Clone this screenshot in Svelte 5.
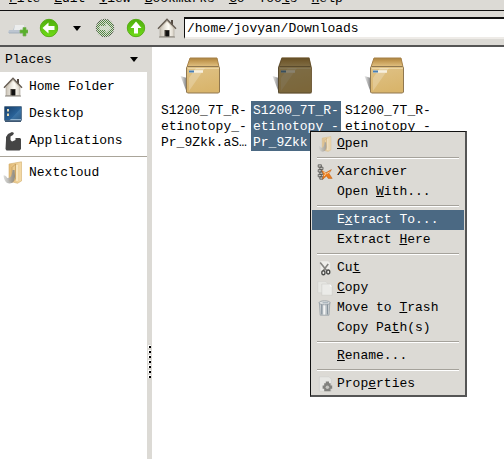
<script>
  const menus = [['F', 'ile'], ['E', 'dit'], ['V', 'iew'], ['B', 'ookmarks'], ['G', 'o'], ['Too', 'l', 's'], ['H', 'elp']];
  const places = [
    { icon: 'home', label: 'Home Folder' },
    { icon: 'desktop', label: 'Desktop' },
    { icon: 'apps', label: 'Applications' }
  ];
  const files = [
    { lines: ['S1200_7T_R-', 'etinotopy_-', 'Pr_9Zkk.aS…'], selected: false },
    { lines: ['S1200_7T_R-', 'etinotopy_-', 'Pr_9Zkk'], selected: true },
    { lines: ['S1200_7T_R-', 'etinotopy_-'], selected: false }
  ];
  // Each entry: text before the mnemonic, the mnemonic, text after it
  const groups = [
    [{ icon: 'folder', t: ['', 'O', 'pen'] }],
    [{ icon: 'xarchiver', t: ['Xarchiver', '', ''] }, { t: ['Open ', 'W', 'ith...'] }],
    [{ t: ['E', 'x', 'tract To...'], active: true }, { t: ['Extract ', 'H', 'ere'] }],
    [
      { icon: 'cut', t: ['Cu', 't', ''] },
      { icon: 'copy', t: ['', 'C', 'opy'] },
      { icon: 'trash', t: ['Move to ', 'T', 'rash'] },
      { t: ['Copy Pa', 't', 'h(s)'] }
    ],
    [{ t: ['', 'R', 'ename...'] }],
    [{ icon: 'props', t: ['Prop', 'e', 'rties'] }]
  ];
  let path = $state('/home/jovyan/Downloads');
</script>

<svelte:head><title>Downloads</title></svelte:head>

<svg class="defs" aria-hidden="true">
  <defs>
    <linearGradient id="green" x2="0" y2="1"><stop offset="0" stop-color="#4fae0e" /><stop offset="1" stop-color="#6fdc16" /></linearGradient>
    <linearGradient id="cream" x2="1"><stop offset="0" stop-color="#c9c2b6" /><stop offset=".6" stop-color="#fffdf6" /><stop offset="1" stop-color="#d6d0c5" /></linearGradient>
    <linearGradient id="tan" x2="1"><stop offset="0" stop-color="#e2b974" /><stop offset="1" stop-color="#f4dba9" /></linearGradient>
    <linearGradient id="steel" x2="1"><stop offset="0" stop-color="#d9d9d6" /><stop offset="1" stop-color="#84827d" /></linearGradient>
    <linearGradient id="box" x2=".3" y2="1"><stop offset="0" stop-color="#dfc287" /><stop offset="1" stop-color="#d9b56c" /></linearGradient>
    <linearGradient id="lid" x2="0" y2="1"><stop offset="0" stop-color="#a98243" /><stop offset=".3" stop-color="#c19750" /><stop offset="1" stop-color="#e5c586" /></linearGradient>
    <linearGradient id="shade" x2="1"><stop offset="0" stop-color="#777" stop-opacity=".15" /><stop offset="1" stop-color="#555" stop-opacity=".8" /></linearGradient>
    <linearGradient id="blue" x2="1" y2="1"><stop offset="0" stop-color="#173e69" /><stop offset=".6" stop-color="#2a6399" /><stop offset="1" stop-color="#173d65" /></linearGradient>
    <pattern id="checks" width="2" height="2" patternUnits="userSpaceOnUse"><path d="M0 0h1v1H0zM1 1h1v1H1z" fill="#dcdad5" /></pattern>
  </defs>
</svg>

{#snippet icon(name)}
  {#if name === 'home'}
    <svg class="icon" viewBox="0 0 20 20" aria-hidden="true">
      <path d="M14 2h2v5h-2z" fill="#554b42" />
      <path d="M3 10 10 3l7 7v8.500H3z" fill="url(#cream)" stroke="#aaa399" stroke-width=".6" />
      <path d="M1 10.700 10 1.300l9 9.400" fill="none" stroke="#665d53" stroke-width="1.500" />
      <path d="M2.500 10.900 10 3.200l7.500 7.700" fill="none" stroke="#c6bcab" stroke-width="1" />
      <path d="M7.500 12h5v6.500h-5z" fill="#39342e" /><path d="M9 13h3v5.500H9z" fill="#111" />
      <path d="M2 19h16" stroke="#858078" />
    </svg>
  {:else if name === 'desktop'}
    <svg class="icon" viewBox="0 0 20 20" aria-hidden="true">
      <rect x="1.500" y="2.500" width="17" height="14" rx=".5" fill="url(#blue)" stroke="#5e7891" />
      <path d="M7 16 18 4v12z" fill="#5b91bd" opacity=".35" />
      <path d="M4 5h2v2.500H4zM4 9.500h2V12H4z" fill="#eadcb2" /><path d="M8 15h10v1.500H6z" fill="#93b3cf" />
      <path d="M2 17.200h16" stroke="#34506c" stroke-width="1.500" />
    </svg>
  {:else if name === 'apps'}
    <svg class="icon" viewBox="0 0 20 20" aria-hidden="true">
      <path d="M3 9V6l2-3 4-2 2 1-1 2-2.500 1.500V9L9 10.500 12.500 9V7H17l1 1v10l-1.500 1.500h-13L2.500 18z" fill="#454545" />
    </svg>
  {:else if name === 'folder'}
    <svg class="icon folder" viewBox="0 0 20 23" aria-hidden="true">
      <path d="M6 3 18.500.800V20L14.500 22.300 6 20z" fill="url(#tan)" stroke="#d4ae6c" stroke-width=".6" />
      <path d="M9 6.500 12.500 3v15L9 21.500z" fill="#e9c98d" stroke="#b88e4d" stroke-width=".6" />
      <path d="M14 4v16" stroke="#fbeccc" stroke-width="1.500" />
      <path d="M.5 14.500c3-.5 3 2.500 4.500 2.500 3 0 4-3 4.500-8h2l.5 6c0 4-2 7.500-5.500 7.500C3 22.500 1 19 .5 14.500z" fill="url(#steel)" opacity=".9" />
    </svg>
  {:else if name === 'xarchiver'}
    <svg class="icon" viewBox="0 0 20 20" aria-hidden="true">
      <path d="M1.500 1h4v3h-4zm2 3h4v3h-4zM1.500 7h4v3h-4zm2 3h4v3h-4zm-2 3h4v3h-4zm2 3h4v3h-4z" fill="#c6c5c0" stroke="#555450" />
      <path d="m6 8 5 3 7-4-3 5 4 6h-5l-2-3-5 4 1-6z" fill="#ed7c1c" stroke="#b85b13" stroke-width=".6" /><path d="m8 10 3 2-2 3m3-3 4-2" fill="none" stroke="#ffd4a2" stroke-width="1.200" />
    </svg>
  {:else if name === 'cut'}
    <svg class="icon" viewBox="0 0 20 20" aria-hidden="true">
      <path d="M4 1h10l3 3v15H4z" fill="#efefeb" stroke="#d0d0cb" stroke-width=".6" />
      <path d="m4 3 8 10M14 5 8 13" stroke="#858581" stroke-width="2" />
      <ellipse cx="8" cy="16" rx="2" ry="2.500" fill="none" stroke="#4b4b49" stroke-width="1.700" /><ellipse cx="14" cy="15" rx="2" ry="2.500" fill="none" stroke="#4b4b49" stroke-width="1.700" />
    </svg>
  {:else if name === 'copy'}
    <svg class="icon" viewBox="0 0 20 20" aria-hidden="true">
      <path d="M1 2h10l2 2v12H1z" fill="#e6e6e2" stroke="#cfcfca" stroke-width=".6" /><path d="M6 5h10l3 3v11H6z" fill="#ebebe8" stroke="#c6c6c1" stroke-width=".6" /><path d="M16 5v3h3" fill="#fff" />
    </svg>
  {:else if name === 'trash'}
    <svg class="icon" viewBox="0 0 20 20" aria-hidden="true">
      <path d="m3 4 1 15h11l1-15z" fill="#ccd1d4" stroke="#98a0a5" /><path d="M6 5v13M13 5v13" stroke="#87939c" stroke-width="1.600" /><path d="M9 5v13" stroke="#f4f5f5" stroke-width="2" />
      <ellipse cx="9.500" cy="3.500" rx="7" ry="2.500" fill="#dee1e2" stroke="#8b969d" /><path d="M7 3.500h7" stroke="#8797a3" />
    </svg>
  {:else if name === 'props'}
    <svg class="icon" viewBox="0 0 20 20" aria-hidden="true">
      <path d="M3 1h12l3 3v15H3z" fill="#e7e7e4" stroke="#cbcbc7" stroke-width=".6" />
      <path d="M9 9h2V7h4v2h2v3h2v4h-2v3H9v-3H7v-4h2z" fill="#81817e" /><circle cx="13" cy="14" r="2.200" fill="#c5c5c1" />
    </svg>
  {/if}
{/snippet}

{#snippet arrow(d, dim)}
  <svg class="icon" viewBox="0 0 20 20" aria-hidden="true">
    <circle cx="10" cy="10" r="8.700" fill={dim ? '#4f8a3e' : 'url(#green)'} stroke={dim ? '#4c5f46' : '#58ac18'} />
    <path {d} fill={dim ? '#c5dcbb' : '#fff'} />
    {#if dim}<circle cx="10" cy="10" r="9.500" fill="url(#checks)" />{/if}
  </svg>
{/snippet}

<div class="window">
  <nav class="menubar" aria-label="Menu bar">
    {#each menus as m}
      <button>{#if m.length === 3}{m[0]}<u>{m[1]}</u>{m[2]}{:else}<u>{m[0]}</u>{m[1]}{/if}</button>
    {/each}
  </nav>

  <div class="toolbar">
    <div class="tools">
      <button aria-label="New tab">
        <svg class="icon" viewBox="0 0 20 20" aria-hidden="true">
          <path d="M0 15 1 12h4l2-5h9l2 6v2z" fill="#bcc5d0" /><path d="m7 7-1 5h11l-1-5z" fill="#eceded" /><path d="M1 15h16" stroke="#a3afbc" />
          <path d="M12 12h3V9.500h3V12h2v3h-2v3h-3v-3h-3z" fill="#58b02a" stroke="#7dac5b" stroke-width=".7" />
        </svg>
      </button>
      <button aria-label="Back">{@render arrow('M3.500 10 9.500 4.500v3.500h6v4h-6v3.500z', false)}</button>
      <button class="drop" aria-label="History"><i class="caret"></i></button>
      <button aria-label="Forward" disabled>{@render arrow('M16.500 10 10.500 4.500v3.500h-6v4h6v3.500z', true)}</button>
      <button aria-label="Up">{@render arrow('M10 3.500 15.500 10h-3.500v5.500h-4V10H4.500z', false)}</button>
      <button aria-label="Home">{@render icon('home')}</button>
    </div>
    <input aria-label="Location" bind:value={path} spellcheck="false" />
  </div>

  <div class="body">
    <aside>
      <button class="heading">Places <i class="caret"></i></button>
      <ul>
        {#each places as p}
          <li><button>{@render icon(p.icon)}<span>{p.label}</span></button></li>
        {/each}
        <li class="bookmark"><button>{@render icon('folder')}<span>Nextcloud</span></button></li>
      </ul>
    </aside>
    <div class="divider">
      {#each Array(7) as _}<i></i>{/each}
    </div>
    <main>
      {#each files as f}
        <button class="file" class:selected={f.selected}>
          <svg class="box" viewBox="0 0 50 40" aria-hidden="true">
            <path d="M1.500 20 8 22v15z" fill="url(#shade)" />
            <path d="M11 2h27l2 9H8z" fill="url(#lid)" stroke="#a78147" />
            <path d="M7.500 11.500 8.500 10.500h31l1 1V36l-1 1h-31l-1-1z" fill="url(#box)" stroke="#8f7750" />
            <path d="M9 12.500h31" stroke="#f2dfb5" opacity=".7" /><path d="M17 12h9L10 35V22z" fill="#fff" opacity=".22" />
            <path d="M10 15.500h14" stroke="#f7f0df" stroke-width="2.500" /><path d="M10 15.500h5" stroke="#477eb5" stroke-width="2" />
            {#if f.selected}<path d="M10.500 1.500h28l2 9v27H7V11z" fill="#2c2510" opacity=".54" />{/if}
          </svg>
          <span class="name">{#each f.lines as line}<span>{line}</span>{/each}</span>
        </button>
      {/each}
    </main>
  </div>

  <div class="context" role="menu">
    {#each groups as group, i}
      {#if i}<hr />{/if}
      {#each group as item}
        <button role="menuitem" class:active={item.active}>
          <span class="slot">{#if item.icon}{@render icon(item.icon)}{/if}</span>
          <span class="label">{item.t[0]}{#if item.t[1]}<u>{item.t[1]}</u>{/if}{item.t[2]}</span>
        </button>
      {/each}
    {/each}
  </div>
</div>

<style>
  :global(body) { margin: 0; }
  .defs { position: absolute; width: 0; height: 0; }
  .window {
    position: relative;
    display: flex;
    flex-direction: column;
    min-height: 100vh;
    overflow: hidden;
    background: #dcdad5;
    color: #000;
    font: 13px/16px "Liberation Mono", monospace;
  }
  button {
    display: flex;
    align-items: center;
    margin: 0;
    padding: 0;
    border: 0;
    background: none;
    color: inherit;
    font: inherit;
    text-align: left;
  }
  u { text-underline-offset: 1px; }
  .menubar {
    display: flex;
    align-items: flex-end;
    gap: 14px;
    height: 10px;
    padding: 0 9px;
    overflow: hidden;
    border-bottom: 1px solid #111;
  }
  .menubar button { display: block; white-space: pre; margin-bottom: 3px; }
  .toolbar {
    display: flex;
    align-items: center;
    gap: 7px;
    height: 34px;
    padding-left: 8px;
    border-bottom: 2px solid #555;
  }
  .tools { display: flex; align-items: center; gap: 11px; }
  .tools .drop { margin: 0 3px; }
  .icon { display: block; flex: none; width: 20px; height: 20px; }
  .icon.folder { height: 23px; }
  .caret {
    width: 0;
    height: 0;
    border: 4px solid transparent;
    border-top: 5px solid #000;
    border-bottom: 0;
  }
  input {
    flex: 1;
    min-width: 0;
    box-sizing: border-box;
    height: 22px;
    padding: 0 2px;
    border: solid #111;
    border-width: 2px 0 2px 1px;
    border-bottom-color: #eeebe7;
    outline: 0;
    background: #fff;
    color: inherit;
    font: inherit;
  }
  .body { display: flex; flex: 1; background: #fff; }
  aside { width: 147px; flex: none; background: #fff; }
  .heading {
    box-sizing: border-box;
    width: 100%;
    height: 25px;
    padding: 0 9px 0 5px;
    justify-content: space-between;
    background: #dcdad5;
  }
  ul { margin: 0; padding: 1px 0 0; list-style: none; }
  li button { gap: 6px; width: 100%; height: 27px; padding-left: 3px; }
  .bookmark { margin-top: 2px; padding-top: 2px; border-top: 1px solid #aaa59a; }
  .divider {
    display: flex;
    flex-direction: column;
    align-items: center;
    justify-content: center;
    gap: 2px;
    box-sizing: border-box;
    width: 5px;
    padding-top: 216px;
    background: #dcdad5;
  }
  .divider i { width: 2px; height: 2px; border: solid #fff; border-width: 1px 0 0 1px; background: #000; }
  main { display: flex; flex: 1; align-items: flex-start; gap: 2px; padding: 9px 0 0 7px; overflow: hidden; }
  .file { flex: none; flex-direction: column; gap: 5px; width: 90px; }
  .box { width: 50px; height: 40px; }
  .name { display: flex; flex-direction: column; align-self: stretch; padding: 2px 2px 0; white-space: nowrap; }
  .selected .name { background: #4b6983; color: #fff; }
  .context {
    position: absolute;
    top: 131px;
    left: 310px;
    box-sizing: border-box;
    width: 157px;
    padding: 2px 1px 1px;
    border: 1px solid #111;
    border-right: 2px solid #555;
    border-bottom: 2px solid #555;
    background: #dcdad5;
  }
  .context button { width: 100%; height: 20px; padding-left: 5px; gap: 4px; }
  .context .slot { width: 16px; flex: none; }
  .context .icon { width: 16px; height: 16px; }
  .context .folder { opacity: .7; }
  .context .label { white-space: pre; }
  .context .active { background: #4b6983; color: #fff; }
  hr { height: 1px; margin: 3px 5px; border: 0; border-top: 1px solid #a5a29b; background: #fff; }
</style>
